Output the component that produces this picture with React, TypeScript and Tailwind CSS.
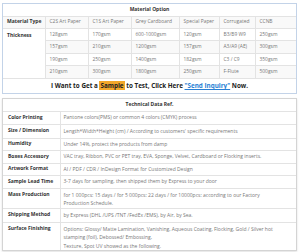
import React from "react";

const mat = ["C2S Art Paper", "C1S Art Paper", "Grey Cardboard", "Special Paper", "Corrugated", "CCNB"];
const thick = [
  ["128gsm", "170gsm", "600-1000gsm", "120gsm", "B3/B9 W9", "250gsm"],
  ["157gsm", "210gsm", "1200gsm", "157gsm", "A3/A9 (AE)", "300gsm"],
  ["190gsm", "250gsm", "1400gsm", "182gsm", "C3 / C9", "350gsm"],
  ["210gsm", "300gsm", "1800gsm", "250gsm", "F-Flute", "500gsm"],
];

const tech: [string, React.ReactNode, string][] = [
  ["Color Printing", "Pantone colors(PMS) or common 4 colors (CMYK) process", "h-[13px]"],
  ["Size / Dimension", "Length*Width*Height (cm) / According to customers' specific requirements", "h-[14px]"],
  ["Humidity", "Under 14%, protect the products from damp", "h-[12px]"],
  ["Boxes Accessory", "VAC tray, Ribbon, PVC or PET tray, EVA, Sponge, Velvet, Cardboard or Flocking inserts.", "h-[13px]"],
  ["Artwork Format", "AI / PDF / CDR / InDesign Format for Customized Design", "h-[12px]"],
  ["Sample Lead Time", "3-7 days for sampling, then shipped them by Express to your door", "h-[13px]"],
  [
    "Mass Production",
    (
      <>
        for 1 000pcs: 15 days / for 5 000pcs: 22 days / for 10000pcs: according to our Factory
        <br />
        Production Schedule.
      </>
    ),
    "h-[20px]",
  ],
  ["Shipping Method", "by Express (DHL /UPS /TNT /FedEx /EMS), by Air, by Sea.", "h-[14px]"],
  [
    "Surface Finishing",
    (
      <>
        Options: Glossy/ Matte Lamination, Vanishing, Aqueous Coating, Flocking, Gold / Silver hot
        <br />
        stamping (foil), Debossed/ Embossing,
        <br />
        Texture, Spot UV showed as the following.
      </>
    ),
    "h-[28px]",
  ],
];

export default function App() {
  return (
    <div
      className="w-[300px] h-[252px] bg-white overflow-hidden pt-[3px] px-[2px]"
      style={{ fontFamily: '"Open Sans", Roboto, sans-serif' }}
    >
      <div className="w-[295px] border border-[#c3d3e8] bg-white">
        <table className="w-full table-fixed border-collapse text-[4.9px] text-[#777]">
          <colgroup>
            <col className="w-[42px]" />
            <col className="w-[43px]" />
            <col className="w-[43px]" />
            <col className="w-[48px]" />
            <col className="w-[40px]" />
            <col className="w-[36px]" />
            <col />
          </colgroup>
          <tbody>
            <tr className="h-[12px]">
              <td colSpan={7} className="text-center font-bold text-[#333] text-[5px] border-b border-[#e3e3e3]">
                Material Option
              </td>
            </tr>
            <tr className="h-[12px] bg-[#f9f9f9]">
              <td className="pl-[4px] font-bold text-[#333] text-[5px] border-r border-b border-[#e3e3e3]">Material Type</td>
              {mat.map((m, i) => (
                <td key={i} className="pl-[4px] border-r border-b border-[#e3e3e3] last:border-r-0 whitespace-nowrap">
                  {m}
                </td>
              ))}
            </tr>
            {thick.map((r, ri) => (
              <tr key={ri} className={`h-[12.5px] ${ri % 2 === 1 ? "bg-[#f9f9f9]" : "bg-white"}`}>
                {ri === 0 && (
                  <td
                    rowSpan={4}
                    className="pl-[4px] align-top pt-[3px] font-bold text-[#333] text-[5px] border-r border-b border-[#e3e3e3] bg-white"
                  >
                    Thickness
                  </td>
                )}
                {r.map((c, ci) => (
                  <td key={ci} className="pl-[4px] border-r border-b border-[#e3e3e3] last:border-r-0 whitespace-nowrap">
                    {c}
                  </td>
                ))}
              </tr>
            ))}
            <tr className="h-[15px]">
              <td colSpan={7} className="text-center font-bold text-[#222] text-[6.3px]">
                I Want to Get a <span className="bg-[#f2a72b] px-[1px]">Sample</span> to Test, Click Here{" "}
                <span className="text-[#2a7fd4] underline">"Send Inquiry"</span> Now.
              </td>
            </tr>
          </tbody>
        </table>
      </div>

      <div className="mt-[4px] w-[295px] border border-[#d4d4d4] shadow-[0_1px_2px_rgba(0,0,0,0.12)] bg-white">
        <table className="w-full table-fixed border-collapse text-[5px] text-[#777]">
          <colgroup>
            <col className="w-[57px]" />
            <col />
          </colgroup>
          <tbody>
            <tr className="h-[12px]">
              <td colSpan={2} className="text-center font-bold text-[#333] text-[5px] border-b border-[#e3e3e3]">
                Technical Data Ref.
              </td>
            </tr>
            {tech.map(([k, v, h], i) => {
              const multi = i >= tech.length - 3 && i !== tech.length - 2;
              const last = i === tech.length - 1;
              return (
                <tr key={i} className={h}>
                  <td
                    className={`pl-[5px] font-bold text-[#333] text-[5px] border-r border-[#e3e3e3] ${
                      last ? "" : "border-b"
                    } ${multi ? "align-top pt-[2px]" : ""}`}
                  >
                    {k}
                  </td>
                  <td
                    className={`pl-[3px] pr-[4px] leading-[8.5px] whitespace-nowrap border-[#e3e3e3] ${
                      last ? "" : "border-b"
                    } ${multi ? "align-top pt-[2px]" : ""}`}
                  >
                    {v}
                  </td>
                </tr>
              );
            })}
          </tbody>
        </table>
      </div>
    </div>
  );
}
